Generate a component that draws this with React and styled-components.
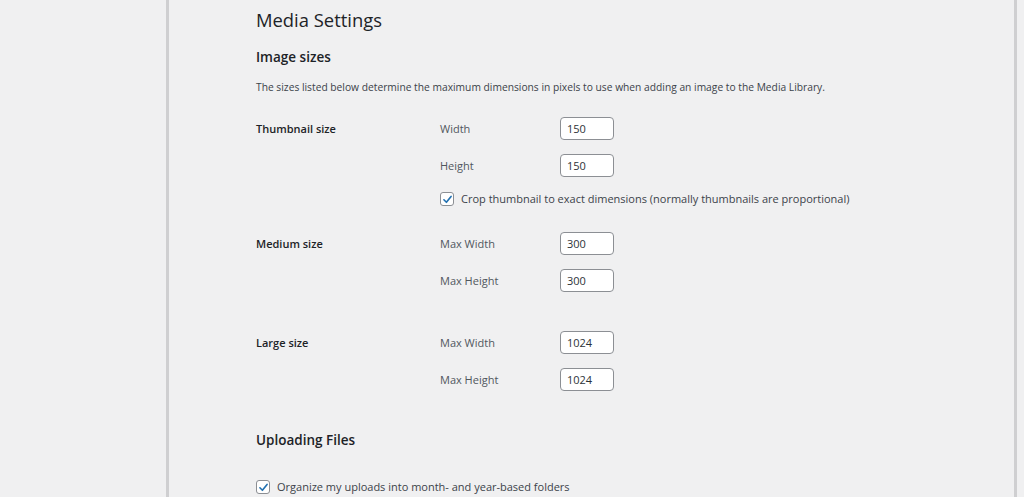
import React from 'react';
import styled, { createGlobalStyle } from 'styled-components';

const GlobalStyle = createGlobalStyle`
  html, body {
    margin: 0;
    padding: 0;
    background: #f0f0f1;
    font-family: "Open Sans", "Noto Sans", sans-serif;
    color: #3c434a;
  }
`;

const Page = styled.div`
  height: 497px;
  overflow: hidden;
  padding-left: 166px;
`;

const Frame = styled.div`
  width: 758px;
  min-height: 497px;
  border-left: 3px solid #cfcfd1;
  border-right: 3px solid #cfcfd1;
  padding-left: 87px;
  box-sizing: content-box;
`;

const Title = styled.h1`
  margin: 0;
  padding-top: 7px;
  font-size: 18.4px;
  font-weight: 400;
  line-height: 26px;
  color: #1d2327;
`;

const SectionTitle = styled.h2`
  margin: ${({ $top }) => $top}px 0 0;
  font-size: 13.5px;
  font-weight: 600;
  line-height: 20px;
  color: #1d2327;
`;

const Description = styled.p`
  margin: 12px 0 0;
  font-size: 10.25px;
  line-height: 16px;
  color: #3c434a;
`;

const SettingRow = styled.div`
  display: grid;
  grid-template-columns: 184px 1fr;
  margin-top: ${({ $top }) => $top}px;
`;

const SettingLabel = styled.div`
  font-size: 11px;
  font-weight: 600;
  line-height: 23px;
  color: #1d2327;
`;

const Fields = styled.div`
  display: flex;
  flex-direction: column;
  gap: 14px;
`;

const Field = styled.label`
  display: grid;
  grid-template-columns: 120px 54px;
  align-items: center;
  font-size: 11px;
  color: #50575e;
`;

const NumberInput = styled.div`
  height: 23px;
  box-sizing: border-box;
  border: 1px solid #8c8f94;
  border-radius: 4px;
  background: #fff;
  padding-left: 6px;
  font-size: 11px;
  line-height: 21px;
  color: #2c3338;
`;

const CheckRow = styled.label`
  display: flex;
  align-items: center;
  gap: 7px;
  margin-top: ${({ $top }) => $top || 0}px;
  font-size: 11px;
  line-height: 14px;
  color: #3c434a;
`;

const Box = styled.span`
  width: 12px;
  height: 12px;
  border: 1px solid #8c8f94;
  border-radius: 3px;
  background: #fff;
  display: flex;
  align-items: center;
  justify-content: center;
  flex-shrink: 0;
`;

function Checkbox() {
  return (
    <Box>
      <svg width="11" height="11" viewBox="0 0 20 20">
        <path d="M3.5 10.5 L8 15 L16.5 4.5" fill="none" stroke="#2271b1" strokeWidth="3" strokeLinecap="round" strokeLinejoin="round" />
      </svg>
    </Box>
  );
}

function SizeField({ label, value }) {
  return (
    <Field>
      <span>{label}</span>
      <NumberInput>{value}</NumberInput>
    </Field>
  );
}

export default function App() {
  return (
    <Page>
      <GlobalStyle />
      <Frame>
        <Title>Media Settings</Title>
        <SectionTitle $top={14}>Image sizes</SectionTitle>
        <Description>
          The sizes listed below determine the maximum dimensions in pixels to use when adding an image to the Media Library.
        </Description>

        <SettingRow $top={22}>
          <SettingLabel>Thumbnail size</SettingLabel>
          <Fields>
            <SizeField label="Width" value="150" />
            <SizeField label="Height" value="150" />
            <CheckRow $top={1}>
              <Checkbox />
              Crop thumbnail to exact dimensions (normally thumbnails are proportional)
            </CheckRow>
          </Fields>
        </SettingRow>

        <SettingRow $top={26}>
          <SettingLabel>Medium size</SettingLabel>
          <Fields>
            <SizeField label="Max Width" value="300" />
            <SizeField label="Max Height" value="300" />
          </Fields>
        </SettingRow>

        <SettingRow $top={39}>
          <SettingLabel>Large size</SettingLabel>
          <Fields>
            <SizeField label="Max Width" value="1024" />
            <SizeField label="Max Height" value="1024" />
          </Fields>
        </SettingRow>

        <SectionTitle $top={39}>Uploading Files</SectionTitle>
        <CheckRow $top={30}>
          <Checkbox />
          Organize my uploads into month- and year-based folders
        </CheckRow>
      </Frame>
    </Page>
  );
}
